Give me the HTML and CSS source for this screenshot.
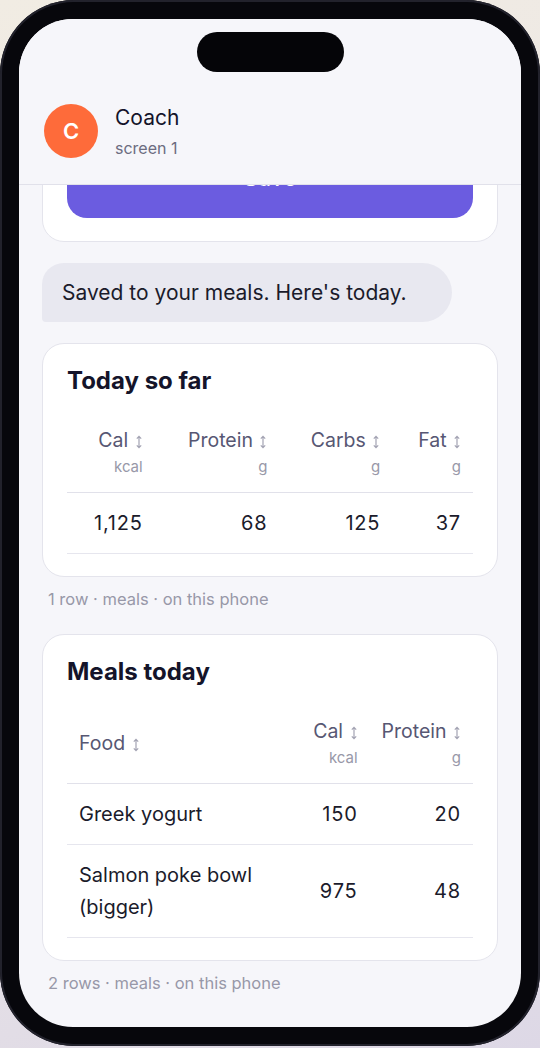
FILE: index.html
```html
<!DOCTYPE html>
<html lang="en">

<head>
    <meta charset="UTF-8">
    <meta name="viewport" content="width=device-width, initial-scale=1.0">
    <title>Coach - screen 1</title>
    <link rel="stylesheet" href="styles.css">
</head>

<body>
    <div class="phone">
        <div class="screen">
            <div class="topbar">
                <div class="island"></div>
                <div class="chat-head">
                    <div class="avatar">C</div>
                    <div class="who">
                        <div class="name">Coach</div>
                        <div class="sub">screen 1</div>
                    </div>
                </div>
            </div>

            <div class="thread">
                <div class="card card-save">
                    <button class="save-btn">Save</button>
                </div>

                <div class="bubble">Saved to your meals. Here's today.</div>

                <div class="card">
                    <h2>Today so far</h2>
                    <table>
                        <thead>
                            <tr>
                                <th class="num"><span class="lbl">Cal <svg class="sort" viewBox="0 0 8 14"><path d="M4 1.5v11M1.8 3.6L4 1.4l2.2 2.2M1.8 10.4L4 12.6l2.2-2.2"/></svg></span><span class="unit">kcal</span></th>
                                <th class="num"><span class="lbl">Protein <svg class="sort" viewBox="0 0 8 14"><path d="M4 1.5v11M1.8 3.6L4 1.4l2.2 2.2M1.8 10.4L4 12.6l2.2-2.2"/></svg></span><span class="unit">g</span></th>
                                <th class="num"><span class="lbl">Carbs <svg class="sort" viewBox="0 0 8 14"><path d="M4 1.5v11M1.8 3.6L4 1.4l2.2 2.2M1.8 10.4L4 12.6l2.2-2.2"/></svg></span><span class="unit">g</span></th>
                                <th class="num"><span class="lbl">Fat <svg class="sort" viewBox="0 0 8 14"><path d="M4 1.5v11M1.8 3.6L4 1.4l2.2 2.2M1.8 10.4L4 12.6l2.2-2.2"/></svg></span><span class="unit">g</span></th>
                            </tr>
                        </thead>
                        <tbody>
                            <tr>
                                <td class="num">1,125</td>
                                <td class="num">68</td>
                                <td class="num">125</td>
                                <td class="num">37</td>
                            </tr>
                        </tbody>
                    </table>
                </div>
                <p class="meta">1 row · meals · on this phone</p>

                <div class="card">
                    <h2>Meals today</h2>
                    <table>
                        <thead>
                            <tr>
                                <th class="txt"><span class="lbl">Food <svg class="sort" viewBox="0 0 8 14"><path d="M4 1.5v11M1.8 3.6L4 1.4l2.2 2.2M1.8 10.4L4 12.6l2.2-2.2"/></svg></span></th>
                                <th class="num"><span class="lbl">Cal <svg class="sort" viewBox="0 0 8 14"><path d="M4 1.5v11M1.8 3.6L4 1.4l2.2 2.2M1.8 10.4L4 12.6l2.2-2.2"/></svg></span><span class="unit">kcal</span></th>
                                <th class="num"><span class="lbl">Protein <svg class="sort" viewBox="0 0 8 14"><path d="M4 1.5v11M1.8 3.6L4 1.4l2.2 2.2M1.8 10.4L4 12.6l2.2-2.2"/></svg></span><span class="unit">g</span></th>
                            </tr>
                        </thead>
                        <tbody>
                            <tr>
                                <td class="txt">Greek yogurt</td>
                                <td class="num">150</td>
                                <td class="num">20</td>
                            </tr>
                            <tr>
                                <td class="txt food">Salmon poke bowl (bigger)</td>
                                <td class="num">975</td>
                                <td class="num">48</td>
                            </tr>
                        </tbody>
                    </table>
                </div>
                <p class="meta">2 rows · meals · on this phone</p>
            </div>
        </div>
    </div>
</body>

</html>
```

FILE: styles.css
```css
* {
    margin: 0;
    padding: 0;
    box-sizing: border-box;
}

body {
    font-family: Inter, "Open Sans", sans-serif;
    background: linear-gradient(160deg, #f1ece3 0%, #e9e4e6 60%, #ddd8e6 100%);
    height: 1048px;
    overflow: hidden;
    color: #1b1b2b;
}

.phone {
    width: 540px;
    height: 1046px;
    padding: 19px;
    background-color: #07070c;
    border-radius: 74px;
    box-shadow: inset 0 0 0 2px #22222c;
}

.screen {
    height: 100%;
    background-color: #f6f6fa;
    border-radius: 54px;
    overflow: hidden;
    display: flex;
    flex-direction: column;
}

.topbar {
    border-bottom: 1px solid #e1e1ea;
    position: relative;
    z-index: 2;
    background-color: #f6f6fa;
}

.island {
    width: 147px;
    height: 40px;
    margin: 13px auto 0;
    border-radius: 20px;
    background-color: #050508;
}

.chat-head {
    display: flex;
    align-items: center;
    gap: 17px;
    padding: 32px 25px 26px;
}

.avatar {
    width: 54px;
    height: 54px;
    border-radius: 50%;
    background-color: #fe6b3a;
    color: #fff;
    font-size: 22px;
    font-weight: 600;
    display: flex;
    align-items: center;
    justify-content: center;
}

.name {
    font-size: 21px;
    line-height: 28px;
    color: #14142a;
}

.sub {
    font-size: 16px;
    line-height: 20px;
    margin-top: 6px;
    color: #6c6c80;
}

.thread {
    flex: 1;
    overflow: hidden;
    padding: 0 23px;
}

.card {
    background-color: #fff;
    border: 1px solid #e4e4ec;
    border-radius: 22px;
    padding: 23px 24px 22px;
}

.card-save {
    margin-top: -64px;
    padding-top: 24px;
    padding-bottom: 23px;
}

.save-btn {
    display: block;
    width: 100%;
    height: 72px;
    border: none;
    border-radius: 20px;
    background-color: #6b5ce0;
    color: #fff;
    font-family: inherit;
    font-size: 23px;
    padding-bottom: 8px;
}

.bubble {
    width: 90%;
    margin: 21px 0;
    padding: 16px 20px;
    font-size: 21px;
    line-height: 27px;
    background-color: #e8e8f0;
    border-radius: 22px 30px 30px 4px;
}

h2 {
    font-size: 24px;
    line-height: 28px;
    font-weight: 700;
    color: #14142a;
    margin-bottom: 16px;
}

table {
    width: 100%;
    border-collapse: collapse;
}

th {
    font-weight: 400;
    padding: 16px 12px 15px;
    border-bottom: 1px solid #e1e1ea;
    vertical-align: middle;
}

th .lbl {
    display: block;
    font-size: 19.5px;
    line-height: 26px;
    color: #575773;
    white-space: nowrap;
}

th .unit {
    display: block;
    margin-top: 4px;
    font-size: 15px;
    line-height: 20px;
    color: #9898a8;
}

.sort {
    width: 8px;
    height: 14px;
    margin-left: 1px;
    vertical-align: -2px;
    fill: none;
    stroke: #a3a3b3;
    stroke-width: 1.2;
}

td {
    font-size: 20px;
    line-height: 32px;
    padding: 14px 12px;
    border-bottom: 1px solid #e6e6ee;
    color: #1b1b2b;
}

.num {
    text-align: right;
}

td.num {
    letter-spacing: 0.8px;
}

.txt {
    text-align: left;
}

td.food {
    width: 60%;
}

.meta {
    font-size: 16.5px;
    line-height: 20px;
    color: #9898a8;
    margin: 12px 0 25px 6px;
}
```
